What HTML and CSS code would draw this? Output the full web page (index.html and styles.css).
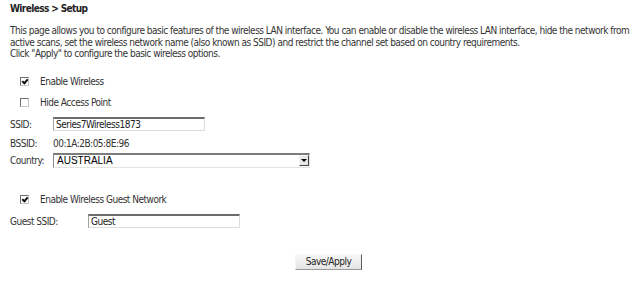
FILE: index.html
```html
<!DOCTYPE html>
<html>
<head>
    <title>Wireless -- Setup</title>
    <link rel="stylesheet" href="styles.css">
</head>
<body>
    <div class="title">Wireless &gt; Setup</div>
    <p class="intro">
        This page allows you to configure basic features of the wireless LAN interface. You can enable or disable the wireless LAN interface, hide the network from<br>
        active scans, set the wireless network name (also known as SSID) and restrict the channel set based on country requirements.<br>
        Click "Apply" to configure the basic wireless options.
    </p>
    <form class="setup-form" onsubmit="return false;">
        <label class="check-row">
            <input type="checkbox" name="wlEnbl" checked>
            <span>Enable Wireless</span>
        </label>
        <label class="check-row">
            <input type="checkbox" name="wlHide">
            <span>Hide Access Point</span>
        </label>
        <div class="field-row">
            <span class="field-label">SSID:</span>
            <input type="text" class="text-box" name="wlSsid" value="Series7Wireless1873">
        </div>
        <div class="field-row short">
            <span class="field-label">BSSID:</span>
            <span>00:1A:2B:05:8E:96</span>
        </div>
        <div class="field-row country">
            <span class="field-label">Country:</span>
            <span class="select-wrap">
                <select name="wlCountry">
                    <option selected>AUSTRALIA</option>
                    <option>NEW ZEALAND</option>
                    <option>UNITED STATES</option>
                </select>
                <span class="select-arrow"></span>
            </span>
        </div>
        <label class="check-row guest">
            <input type="checkbox" name="wlGuest" checked>
            <span>Enable Wireless Guest Network</span>
        </label>
        <div class="field-row">
            <span class="field-label wide">Guest SSID:</span>
            <input type="text" class="text-box" name="wlGuestSsid" value="Guest">
        </div>
        <div class="actions">
            <button type="submit" class="apply-button">Save/Apply</button>
        </div>
    </form>
</body>
</html>
```

FILE: styles.css
```css
body {
    margin: 0;
    padding: 0 10px;
    font-family: "DejaVu Sans Condensed", "DejaVu Sans", sans-serif;
    font-size: 10px;
    letter-spacing: -0.5px;
    color: #333;
    background: #fff;
}
.title {
    margin-top: 3px;
    line-height: 12px;
    font-weight: bold;
    letter-spacing: -0.6px;
    color: #222;
}
.intro {
    margin: 10px 0 0;
    line-height: 11.5px;
    white-space: nowrap;
}
.setup-form {
    margin-top: 11px;
}
.check-row {
    display: flex;
    align-items: center;
    height: 21px;
    padding-left: 10px;
}
.check-row.guest {
    margin-top: 19px;
}
.check-row input[type="checkbox"] {
    appearance: none;
    -webkit-appearance: none;
    position: relative;
    width: 9px;
    height: 9px;
    margin: 0 11px 0 0;
    border: 1px solid;
    border-color: #6e6e6e #c8c8c8 #c8c8c8 #6e6e6e;
    background: #fff;
}
.check-row input[type="checkbox"]:checked::after {
    content: "";
    position: absolute;
    left: 2px;
    top: 0px;
    width: 2px;
    height: 4px;
    border: solid #111;
    border-width: 0 2px 2px 0;
    transform: rotate(40deg);
}
.field-row {
    display: flex;
    align-items: center;
    height: 23px;
}
.field-row.short {
    height: 16px;
}
.field-row.country {
    height: 18px;
}
.field-label {
    width: 43px;
}
.field-label.wide {
    width: 78px;
}
.text-box {
    box-sizing: border-box;
    width: 152px;
    height: 14px;
    margin: 0;
    padding: 0 2px;
    border: 1px solid #dcdcdc;
    border-top: 2px solid #6c6c6c;
    border-left: 1px solid #a0a0a0;
    font: inherit;
    letter-spacing: inherit;
    color: #222;
    outline: none;
}
.select-wrap {
    position: relative;
    display: inline-block;
}
.select-wrap select {
    appearance: none;
    -webkit-appearance: none;
    box-sizing: border-box;
    width: 257px;
    height: 15px;
    margin: 0;
    padding: 0 0 0 3px;
    border: 1px solid #e2e2e2;
    border-top: 2px solid #7c7c7c;
    border-left: 1px solid #8a8a8a;
    border-radius: 0;
    background: #fff;
    font-family: "Liberation Sans", Arial, sans-serif;
    font-size: 10px;
    line-height: 12px;
    letter-spacing: 0;
    color: #000;
    outline: none;
}
.select-arrow {
    position: absolute;
    right: 1px;
    top: 2px;
    width: 10px;
    height: 11px;
    box-sizing: border-box;
    border: 1px solid;
    border-color: #f4f4f4 #404040 #404040 #f4f4f4;
    background: #e8e8e8;
    pointer-events: none;
}
.select-arrow::after {
    content: "";
    position: absolute;
    left: 1px;
    top: 3px;
    border-left: 3px solid transparent;
    border-right: 3px solid transparent;
    border-top: 3px solid #000;
}
.actions {
    display: flex;
    justify-content: center;
    margin-top: 21px;
    padding-left: 17px;
}
.apply-button {
    width: 67px;
    height: 16px;
    margin: 0;
    padding: 0;
    border: 1px solid;
    border-color: #f6f6f6 #5a5a5a #9a9a9a #f6f6f6;
    background: linear-gradient(#f8f8f8, #e4e4e4);
    font: inherit;
    letter-spacing: inherit;
    color: #222;
    cursor: pointer;
}
```
